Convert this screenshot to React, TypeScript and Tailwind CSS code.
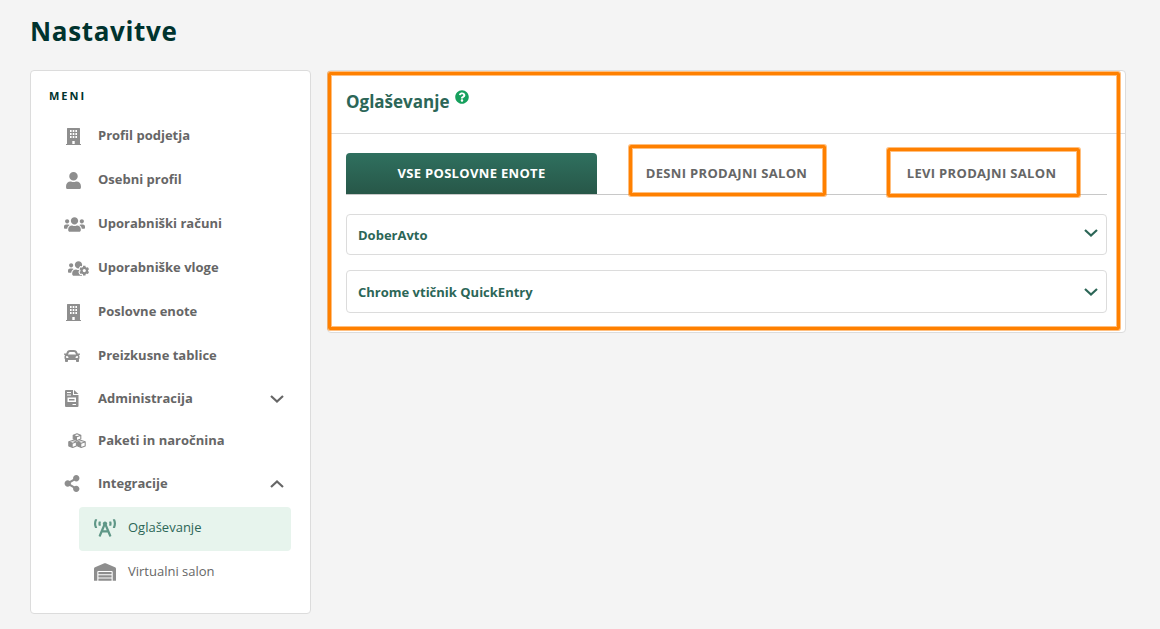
import React, { useState } from "react"
import { FaUser, FaUsers, FaUsersCog, FaCar, FaShareAlt, FaWarehouse, FaQuestionCircle, FaBroadcastTower } from "react-icons/fa"

type IconProps = { className?: string }

function BuildingIcon({ className }: IconProps) {
  return (
    <svg viewBox="0 0 15 17" className={className} fill="currentColor" aria-hidden="true">
      <path
        fillRule="evenodd"
        d="M1 .6Q1 0 1.600 0H13.400Q14 0 14 .6V16H15V17H0V16H1ZM4 2V4H5.600V2ZM6.700 2V4H8.300V2ZM9.400 2V4H11V2ZM4 5V7H5.600V5ZM6.700 5V7H8.300V5ZM9.400 5V7H11V5ZM4 8V10H5.600V8ZM6.700 8V10H8.300V8ZM9.400 8V10H11V8ZM6.300 13V16H8.700V13Z"
      />
    </svg>
  )
}

function InvoiceIcon({ className }: IconProps) {
  return (
    <svg viewBox="0 0 14 17" className={className} fill="currentColor" aria-hidden="true">
      <path
        fillRule="evenodd"
        d="M1 0H8V5H13.500V16Q13.500 17 12.500 17H1Q0 17 0 16V1Q0 0 1 0ZM2 2V3H6V2ZM2 4.500V5.500H6V4.500ZM2.500 7.500V12H11V7.500ZM4 9H9.500V10.500H4ZM7.500 14V15H11V14Z"
      />
      <path d="M9 0L13.500 4H9Z" />
    </svg>
  )
}

function CubesIcon({ className }: IconProps) {
  return (
    <svg viewBox="0 0 18 16" className={className} fill="none" stroke="currentColor" strokeWidth="1.100" strokeLinejoin="round" aria-hidden="true">
      <path d="M9 .8L12.800 2.200V6L9 7.500L5.200 6V2.200ZM5.200 2.200L9 3.700L12.800 2.200M4.700 7.500L8.400 8.800V12.900L4.700 14.500L.8 12.900V8.800ZM.8 8.800L4.700 10.300L8.400 8.800M13.300 7.500L17.200 8.800V12.900L13.300 14.500L9.600 12.900V8.800ZM9.600 8.800L13.300 10.300L17.200 8.800" />
      <path fill="currentColor" stroke="none" d="M5.200 2.200L9 3.700V7.500L5.200 6ZM.8 8.800L4.700 10.300V14.500L.8 12.900ZM9.600 8.800L13.300 10.300V14.500L9.600 12.900Z" />
    </svg>
  )
}

function Chevron({ className }: IconProps) {
  return (
    <svg viewBox="0 0 14 8" className={className} fill="none" stroke="currentColor" strokeWidth="2.200" aria-hidden="true">
      <path d="M1 1L7 6.500L13 1" />
    </svg>
  )
}

const menuItems = [
  { label: "Profil podjetja", Icon: BuildingIcon, size: "w-[15px] h-[17px] ml-0.5" },
  { label: "Osebni profil", Icon: FaUser, size: "w-[15px] h-[17px] ml-0.5" },
  { label: "Uporabniški računi", Icon: FaUsers, size: "w-[21px] h-[17px]" },
  { label: "Uporabniške vloge", Icon: FaUsersCog, size: "w-[21px] h-[17px] ml-1" },
  { label: "Poslovne enote", Icon: BuildingIcon, size: "w-[15px] h-[17px] ml-0.5" },
  { label: "Preizkusne tablice", Icon: FaCar, size: "w-4 h-4" },
  { label: "Administracija", Icon: InvoiceIcon, size: "w-[14px] h-[17px] ml-px", group: true },
  { label: "Paketi in naročnina", Icon: CubesIcon, size: "w-[18px] h-4 ml-1" },
  { label: "Integracije", Icon: FaShareAlt, size: "w-4 h-[17px]", group: true },
]

const tabs = ["Vse poslovne enote", "Desni prodajni salon", "Levi prodajni salon"]

const highlight =
  "pointer-events-none absolute rounded-xs border-3 border-[#ff8000] shadow-[0_0_0_1px_#ff800080,inset_0_0_0_1px_#ff800080]"

function Sidebar() {
  const [open, setOpen] = useState("Integracije")

  return (
    <nav aria-label="Meni" className="w-[281px] shrink-0 rounded border border-[#dcdcdc] bg-white pb-[18px]">
      <h2 className="pl-[18px] pt-4 text-[11px] leading-[18px] font-bold tracking-[2px] text-[#00332e]">MENI</h2>
      <ul className="pt-[9px] text-[13px] font-bold text-[#666]">
        {menuItems.map(({ label, Icon, size, group }) => (
          <li key={label}>
            {group ? (
              <button
                onClick={() => setOpen(open === label ? "" : label)}
                aria-expanded={open === label}
                className="flex h-[41px] w-full items-center pl-[33px] pr-[26px] text-left"
              >
                <span className="w-[34px] shrink-0 text-[#8e8e8e]">
                  <Icon className={size} />
                </span>
                <span className="grow">{label}</span>
                <Chevron className={open === label ? "h-2 w-3.5 rotate-180" : "h-2 w-3.5"} />
              </button>
            ) : (
              <a href="#" className="flex h-11 items-center pl-[33px]">
                <span className="w-[34px] shrink-0 text-[#8e8e8e]">
                  <Icon className={size} />
                </span>
                {label}
              </a>
            )}
          </li>
        ))}
      </ul>
      {open === "Integracije" && (
        <ul className="ml-12 mr-[19px] pt-[3px] text-[13px]">
          <li>
            <a href="#" aria-current="page" className="flex h-11 items-center rounded bg-[#e7f4ed] pb-0.5 pl-[15px] text-[#2c6657]">
              <FaBroadcastTower className="mr-3 h-[18px] w-[22px] text-[#5f9787]" />
              Oglaševanje
            </a>
          </li>
          <li>
            <a href="#" className="flex h-11 items-center pb-0.5 pl-[15px] text-[#666]">
              <FaWarehouse className="mr-3 h-[18px] w-[22px] text-[#8e8e8e]" />
              Virtualni salon
            </a>
          </li>
        </ul>
      )}
    </nav>
  )
}

export default function App() {
  const [tab, setTab] = useState(0)

  return (
    <div className="min-h-screen bg-[#f4f4f4] pb-4 pl-[30px] pr-[34px] font-['Open_Sans',sans-serif]">
      <h1 className="pb-5 pt-3 text-[26px] leading-[38px] font-bold tracking-wide text-[#00332e]">Nastavitve</h1>
      <div className="flex items-start gap-4">
        <Sidebar />
        <main className="relative min-w-0 grow rounded border border-[#dcdcdc] bg-white">
          <header className="flex h-[63px] items-center gap-1.5 border-b border-[#dcdcdc] pl-[18px]">
            <h2 className="text-[17px] leading-6 font-bold text-[#2c6657]">Oglaševanje</h2>
            <button aria-label="Pomoč" className="mb-2.5 text-[#16a05d]">
              <FaQuestionCircle className="size-3.5" />
            </button>
          </header>
          <div className="px-[18px] py-[19px]">
            <div role="tablist" className="grid grid-cols-3 gap-1 border-b border-[#c8c8c8]">
              {tabs.map((name, i) => (
                <button
                  key={name}
                  role="tab"
                  aria-selected={tab === i}
                  onClick={() => setTab(i)}
                  className={
                    tab === i
                      ? "h-[41px] rounded-t bg-linear-to-b from-[#2f705f] to-[#275748] text-[13px] font-bold tracking-wide text-white uppercase"
                      : "h-[41px] text-[13px] font-bold tracking-wide text-[#666] uppercase"
                  }
                >
                  {name}
                </button>
              ))}
            </div>
            <div className="space-y-[15px] pt-[19px] text-[13px] font-bold text-[#2c6657]">
              <button className="flex h-[41px] w-full items-center justify-between rounded border border-[#dcdcdc] pl-[11px] pr-2">
                <span className="pt-0.5">DoberAvto</span>
                <Chevron className="mb-1 h-2 w-3.5" />
              </button>
              <button className="flex h-[43px] w-full items-center justify-between rounded border border-[#dcdcdc] pl-[11px] pr-2">
                <span className="pt-0.5">Chrome vtičnik QuickEntry</span>
                <Chevron className="h-2 w-3.5" />
              </button>
            </div>
          </div>
          <div className={`${highlight} top-px right-[5px] bottom-0.5 left-0`} />
          <div className={`${highlight} top-[74px] left-[301px] h-[51px] w-[197px]`} />
          <div className={`${highlight} top-[77px] left-[559px] h-[49px] w-[193px]`} />
        </main>
      </div>
    </div>
  )
}
